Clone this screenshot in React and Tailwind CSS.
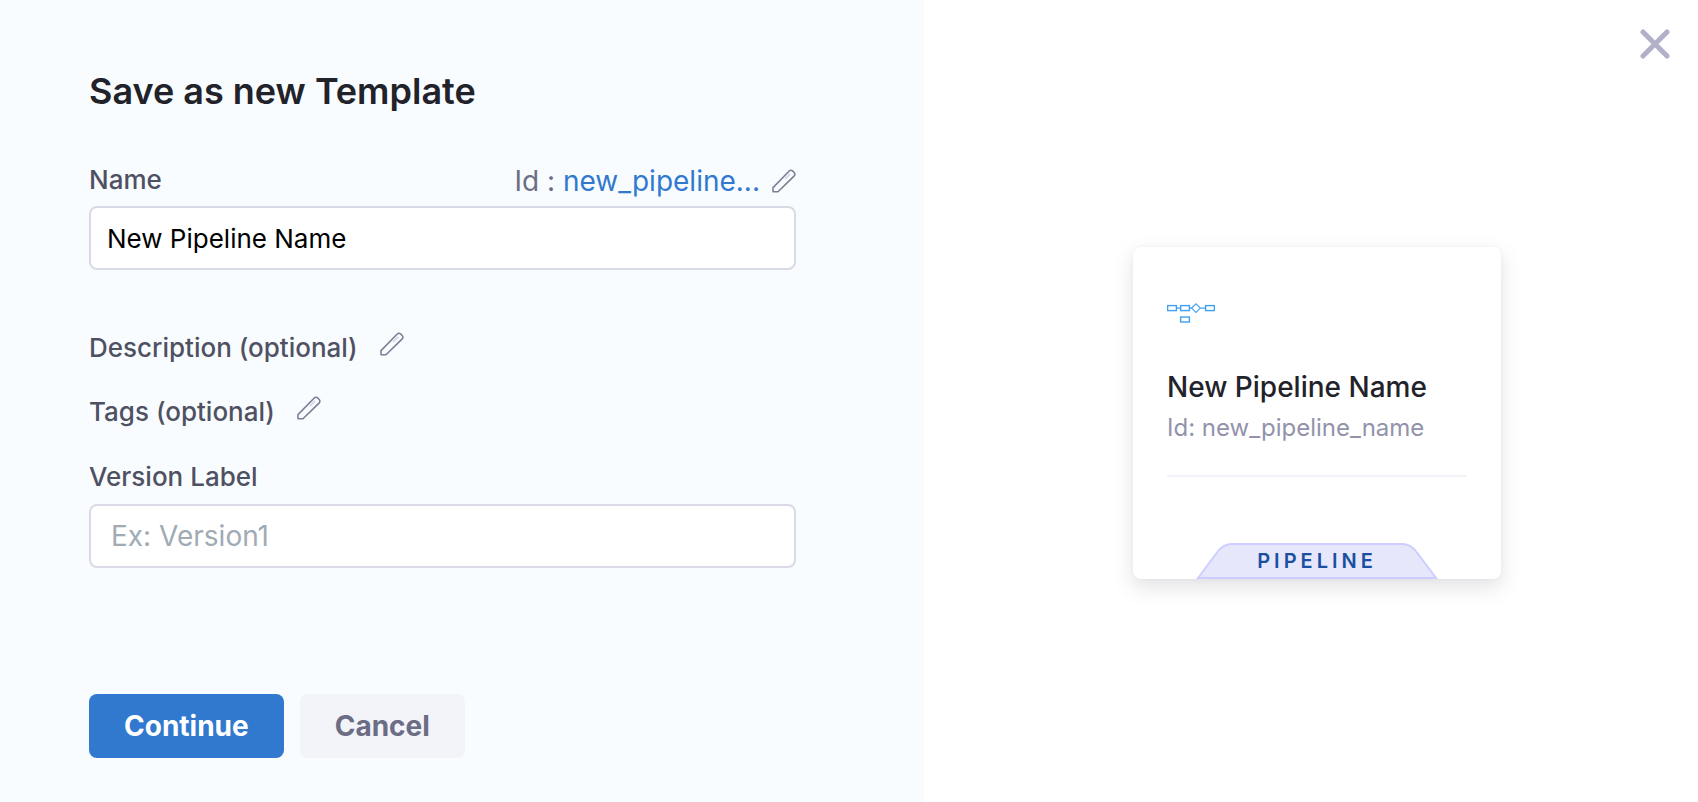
function Pencil({ className }) {
  return (
    <svg viewBox="0 0 24 24" fill="none" className={className} aria-hidden="true">
      <path
        d="M1 22.8V18.6L17 2.2C18.2 1 19.6 1 20.8 2.1L22 3.3C23.2 4.5 23.2 5.9 22 7.1L6 22.8Z"
        stroke="#7d7f96"
        strokeWidth="1.6"
        strokeLinejoin="round"
      />
      <path d="M13 10L18 5" stroke="#d9dae5" strokeWidth="2" />
    </svg>
  );
}

function PipelineIcon({ className }) {
  return (
    <svg viewBox="0 0 48 48" fill="none" stroke="#42a0f0" className={className} aria-hidden="true">
      <rect x="0.6" y="16.6" width="8.8" height="5" strokeWidth="1.4" />
      <rect x="13.6" y="16.6" width="8.8" height="5" strokeWidth="1.4" />
      <rect x="38.6" y="16.6" width="8.8" height="5" strokeWidth="1.4" />
      <rect x="13.6" y="28" width="8.8" height="5" strokeWidth="1.4" />
      <path d="M10 19.1h3M23 19.1h2M33.5 19.1H38" strokeWidth="1.2" />
      <path d="M29 14.8l4.3 4.3L29 23.4l-4.3-4.3Z" strokeWidth="1.1" />
    </svg>
  );
}

const label = "text-[26px] leading-8 font-medium text-[#4f5162]";
const field =
  "block h-16 w-full rounded-lg border-2 border-[#d9dae5] bg-white leading-8 outline-none focus:border-[#3079cf]";
const button = "h-16 rounded-lg px-[35px] text-[28px] leading-8 font-bold";

export default function App() {
  return (
    <div className="flex min-h-screen bg-white font-['Inter','Liberation_Sans',sans-serif]">
      <main className="w-[54.4%] shrink-0 bg-[#f8fcff] px-[89px] pt-[69px] pb-11">
        <form className="flex max-w-[707px] flex-col" onSubmit={(e) => e.preventDefault()}>
          <h1 className="text-4xl leading-[44px] font-semibold text-[#22222a]">Save as new Template</h1>

          <div className="mt-[51px] flex items-start justify-between">
            <label htmlFor="name" className={label}>Name</label>
            <div className="flex items-center gap-3 text-[28px] leading-[34px] text-[#6b6d85]">
              <span>
                Id : <span className="text-[#3079cf]">new_pipeline...</span>
              </span>
              <button type="button" aria-label="Edit id">
                <Pencil className="size-6" />
              </button>
            </div>
          </div>
          <input
            id="name"
            defaultValue="New Pipeline Name"
            className={`${field} mt-2 px-4 text-[26px] text-black`}
          />

          <div className="mt-[62px] flex items-start gap-[22px]">
            <span className={label}>Description (optional)</span>
            <button type="button" aria-label="Edit description">
              <Pencil className="size-6" />
            </button>
          </div>
          <div className="mt-8 flex items-start gap-[22px]">
            <span className={label}>Tags (optional)</span>
            <button type="button" aria-label="Edit tags">
              <Pencil className="size-6" />
            </button>
          </div>

          <label htmlFor="version" className={`${label} mt-[33px]`}>Version Label</label>
          <input
            id="version"
            placeholder="Ex: Version1"
            className={`${field} mt-[11px] px-5 text-[28px] text-black placeholder:text-[#a0abb5]`}
          />

          <div className="mt-[126px] flex gap-4">
            <button type="submit" className={`${button} bg-[#3079cf] text-white`}>
              Continue
            </button>
            <button type="button" className={`${button} bg-[#f3f3fa] text-[#6b6d85]`}>
              Cancel
            </button>
          </div>
        </form>
      </main>

      <aside className="flex flex-1 flex-col">
        <button type="button" aria-label="Close" className="mt-[29px] mr-7 self-end">
          <svg viewBox="0 0 30 30" className="size-[30px]" aria-hidden="true">
            <path d="M3 3L27 27M27 3L3 27" stroke="#b0b1c8" strokeWidth="5" strokeLinecap="round" />
          </svg>
        </button>
        <article className="mt-[188px] mr-[197px] flex h-[332px] w-[368px] flex-col self-end rounded-lg bg-white px-[34px] shadow-[0_0_4px_rgba(40,41,61,0.04),0_8px_20px_rgba(96,97,112,0.18)]">
          <PipelineIcon className="mt-[42px] size-12" />
          <h2 className="mt-8 text-[28px] leading-9 font-medium text-[#22222a]">New Pipeline Name</h2>
          <p className="mt-[7px] text-2xl leading-8 text-[#9293ab]">Id: new_pipeline_name</p>
          <hr className="mt-[31px] border-t-2 border-[#f3f3fa]" />
          <div className="mt-auto grid place-items-center self-center">
            <svg viewBox="0 0 242 36" className="col-start-1 row-start-1 h-9 w-[242px]" aria-hidden="true">
              <path
                d="M2 35L21 9.5Q27 1 36 1H206Q215 1 221 9.5L240 35Z"
                fill="#e7e7fb"
                stroke="#cdcdff"
                strokeWidth="2"
              />
            </svg>
            <span className="col-start-1 row-start-1 text-xl leading-6 font-semibold tracking-[4px] text-[#1b4fa0]">
              PIPELINE
            </span>
          </div>
        </article>
      </aside>
    </div>
  );
}
